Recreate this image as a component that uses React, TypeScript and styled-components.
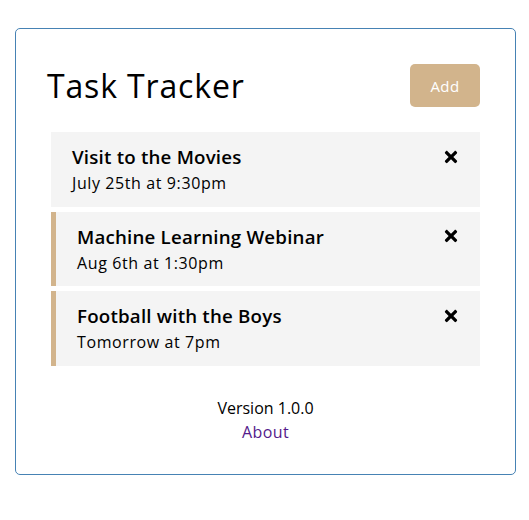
import React from "react";
import styled, { createGlobalStyle } from "styled-components";
import { FaTimes } from "react-icons/fa";

const GlobalStyle = createGlobalStyle`
  * { box-sizing: border-box; margin: 0; padding: 0; }
  body { font-family: "Open Sans", "DejaVu Sans", sans-serif; background: #fff; color: #000; }
`;

const Container = styled.div`
  width: 501px;
  margin: 28px 0 0 15px;
  border: 1px solid steelblue;
  border-radius: 5px;
  padding: 30px;
`;

const Header = styled.header`
  display: flex;
  justify-content: space-between;
  align-items: center;
  margin-bottom: 20px;
`;

const Title = styled.h1`
  font-size: 32px;
  font-weight: 400;
  line-height: 48px;
  letter-spacing: 0.85px;
  padding-left: 1px;
`;

const Button = styled.button`
  background: #d2b48c;
  color: #fff;
  border: none;
  border-radius: 5px;
  margin: 5px;
  width: 70px;
  height: 43px;
  font-family: inherit;
  font-size: 15px;
  letter-spacing: 0.4px;
  cursor: pointer;
`;

const TaskItem = styled.div<{ $reminder?: boolean }>`
  background: #f4f4f4;
  margin: 5px;
  padding: 10px 20px;
  border-left: ${(p) => (p.$reminder ? "5px solid #d2b48c" : "none")};
  height: 74.5px;
`;

const TaskTitle = styled.h3`
  display: flex;
  justify-content: space-between;
  align-items: center;
  font-size: 18.72px;
  font-weight: 600;
  line-height: 29px;
  letter-spacing: 0.2px;
  padding-left: 1px;
`;

const TaskDay = styled.p`
  font-size: 16px;
  line-height: 24px;
  letter-spacing: 0.6px;
  padding-left: 1px;
`;

const Footer = styled.footer`
  margin-top: 30px;
  text-align: center;
  font-size: 16px;
  line-height: 24px;
`;

const AboutLink = styled.a`
  color: #551a8b;
  text-decoration: none;
  letter-spacing: 0.4px;
`;

const tasks = [
  { id: 1, text: "Visit to the Movies", day: "July 25th at 9:30pm", reminder: false },
  { id: 2, text: "Machine Learning Webinar", day: "Aug 6th at 1:30pm", reminder: true },
  { id: 3, text: "Football with the Boys", day: "Tomorrow at 7pm", reminder: true },
];

export default function App() {
  return (
    <>
      <GlobalStyle />
      <Container>
        <Header>
          <Title>Task Tracker</Title>
          <Button>Add</Button>
        </Header>
        {tasks.map((t) => (
          <TaskItem key={t.id} $reminder={t.reminder}>
            <TaskTitle>
              {t.text}
              <FaTimes size={18} />
            </TaskTitle>
            <TaskDay>{t.day}</TaskDay>
          </TaskItem>
        ))}
        <Footer>
          <p>Version 1.0.0</p>
          <AboutLink href="#about">About</AboutLink>
        </Footer>
      </Container>
    </>
  );
}
